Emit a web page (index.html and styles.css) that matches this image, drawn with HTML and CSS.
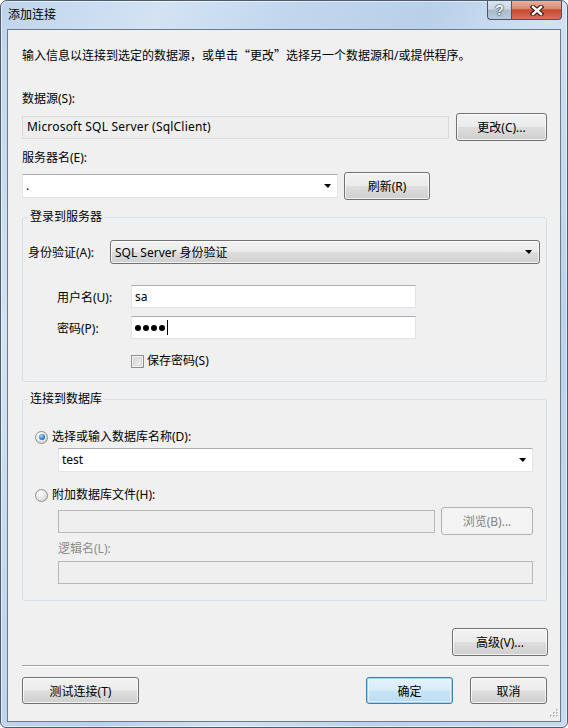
FILE: index.html
```html
<!DOCTYPE html>
<html lang="zh-CN">
<head>
    <meta charset="UTF-8">
    <title>添加连接</title>
    <link rel="stylesheet" href="styles.css">
</head>
<body>
    <div class="window">
        <div class="titlebar">
            <span class="title">添加连接</span>
            <div class="caption-btns">
                <div class="cap help">?</div>
                <div class="cap close">
                    <svg width="14" height="11" viewBox="0 0 14 11">
                        <path d="M3 2 L11 9 M11 2 L3 9" stroke="#3b1810" stroke-width="4.6" stroke-linecap="square"/>
                        <path d="M3 2 L11 9 M11 2 L3 9" stroke="#ffffff" stroke-width="2.4" stroke-linecap="square"/>
                    </svg>
                </div>
            </div>
        </div>

        <div class="client">
            <p class="desc">输入信息以连接到选定的数据源，或单击<span class="cjk">“</span>更改<span class="cjk">”</span>选择另一个数据源和/或提供程序。</p>

            <div class="label lbl-source">数据源(S):</div>
            <div class="row row-source">
                <div class="field readonly">Microsoft SQL Server (SqlClient)</div>
                <button class="btn btn-change">更改(C)...</button>
            </div>

            <div class="label lbl-server">服务器名(E):</div>
            <div class="row row-server">
                <div class="field combo combo-server"><span class="combo-text">.</span><span class="arrow"></span></div>
                <button class="btn btn-refresh">刷新(R)</button>
            </div>

            <fieldset class="group group-login">
                <legend>登录到服务器</legend>
                <div class="group-body login-body">
                    <div class="row auth-row">
                        <span class="auth-label">身份验证(A):</span>
                        <div class="dropdown"><span class="combo-text">SQL Server 身份验证</span><span class="arrow"></span></div>
                    </div>
                    <div class="row cred-row user-row">
                        <span class="cred-label">用户名(U):</span>
                        <div class="field cred-field">sa</div>
                    </div>
                    <div class="row cred-row pwd-row">
                        <span class="cred-label">密码(P):</span>
                        <div class="field cred-field pwd">
                            <span class="dot"></span><span class="dot"></span><span class="dot"></span><span class="dot"></span><span class="caret"></span>
                        </div>
                    </div>
                    <label class="check-row">
                        <span class="checkbox"></span>保存密码(S)
                    </label>
                </div>
            </fieldset>

            <fieldset class="group group-db">
                <legend>连接到数据库</legend>
                <div class="group-body db-body">
                    <label class="radio-row">
                        <span class="radio checked"></span>选择或输入数据库名称(D):
                    </label>
                    <div class="field combo combo-db"><span class="combo-text">test</span><span class="arrow"></span></div>

                    <label class="radio-row radio-attach">
                        <span class="radio"></span>附加数据库文件(H):
                    </label>
                    <div class="row browse-row">
                        <div class="field disabled file-field"></div>
                        <button class="btn btn-disabled btn-browse">浏览(B)...</button>
                    </div>
                    <div class="label lbl-logic">逻辑名(L):</div>
                    <div class="field disabled logic-field"></div>
                </div>
            </fieldset>

            <div class="row advanced-row">
                <button class="btn btn-advanced">高级(V)...</button>
            </div>

            <div class="separator"></div>

            <div class="row bottom-row">
                <button class="btn btn-test">测试连接(T)</button>
                <button class="btn btn-default btn-ok">确定</button>
                <button class="btn btn-cancel">取消</button>
            </div>

            <svg class="grip" width="11" height="11" viewBox="0 0 11 11">
                <rect x="8" y="0" width="2" height="2" fill="#b9b9b9"/>
                <rect x="5" y="3" width="2" height="2" fill="#b9b9b9"/>
                <rect x="8" y="3" width="2" height="2" fill="#b9b9b9"/>
                <rect x="2" y="6" width="2" height="2" fill="#b9b9b9"/>
                <rect x="5" y="6" width="2" height="2" fill="#b9b9b9"/>
                <rect x="8" y="6" width="2" height="2" fill="#b9b9b9"/>
                <rect x="9" y="1" width="1" height="1" fill="#fff"/>
                <rect x="6" y="4" width="1" height="1" fill="#fff"/>
                <rect x="9" y="4" width="1" height="1" fill="#fff"/>
                <rect x="3" y="7" width="1" height="1" fill="#fff"/>
                <rect x="6" y="7" width="1" height="1" fill="#fff"/>
                <rect x="9" y="7" width="1" height="1" fill="#fff"/>
            </svg>
        </div>
    </div>
</body>
</html>
```

FILE: styles.css
```css
* {
    box-sizing: border-box;
}
body {
    margin: 0;
    font-family: "Segoe UI", "Noto Sans", "Noto Sans CJK SC", sans-serif;
    font-size: 12px;
    color: #000;
    background: #fff;
}
.cjk {
    font-family: "Noto Sans CJK SC", sans-serif;
}

/* window frame */
.window {
    width: 568px;
    height: 728px;
    border: 1px solid #4d5d70;
    border-radius: 7px 7px 6px 6px;
    background: linear-gradient(115deg, #bfd4ec 0%, #d3e3f4 18%, #c2d7ee 32%, #b9d0ea 48%, #d2e2f3 62%, #bcd2eb 78%, #c8dbf0 100%);
    box-shadow: inset 0 0 0 1px rgba(255, 255, 255, 0.55);
    display: flex;
    flex-direction: column;
}
.titlebar {
    height: 28px;
    display: flex;
    align-items: flex-start;
}
.title {
    padding: 5px 0 0 7px;
    line-height: 18px;
}
.caption-btns {
    margin-left: auto;
    margin-right: 5px;
    display: flex;
    height: 19px;
}
.cap {
    height: 19px;
    border: 1px solid #4a5667;
    border-top: none;
    display: flex;
    align-items: center;
    justify-content: center;
}
.help {
    width: 24px;
    border-right: none;
    border-radius: 0 0 0 4px;
    background: linear-gradient(#dbe5ef 0%, #c9d6e3 45%, #a8bacc 50%, #b9cadb 100%);
    color: #fff;
    font-weight: bold;
    font-size: 14px;
    font-family: "Liberation Sans", sans-serif;
    text-shadow: 0 0 1px #2c3a48, 0 0 1px #2c3a48, 0 0 2px #2c3a48;
}
.close {
    width: 51px;
    border-radius: 0 0 4px 0;
    background: linear-gradient(#eab0a0 0%, #dc8a74 42%, #c64a30 50%, #d4735c 100%);
}

/* client area */
.client {
    flex: 1;
    margin: 0 6px 5px;
    border: 1px solid #6c7a89;
    background: #f0f0f0;
    padding: 0 13px 0 14px;
    position: relative;
    display: flex;
    flex-direction: column;
}
.desc {
    margin: 16px 0 0;
    line-height: 18px;
}
.label {
    line-height: 18px;
}
.lbl-source {
    margin-top: 25px;
}
.lbl-server {
    margin-top: 8px;
}
.row {
    display: flex;
    align-items: center;
}

/* fields */
.field {
    height: 23px;
    background: #fff;
    border: 1px solid #e2e3ea;
    border-top-color: #abadb3;
    padding: 0 3px;
    display: flex;
    align-items: center;
    line-height: 18px;
}
.readonly {
    width: 427px;
    background: #eeeeee;
    border-color: #dadada;
    padding-left: 4px;
    letter-spacing: 0.2px;
}
.disabled {
    background: #efefef;
    border-color: #b5b8ba;
}
.combo {
    height: 24px;
}
.combo-text {
    flex: 1;
}
.arrow {
    width: 0;
    height: 0;
    border-left: 4px solid transparent;
    border-right: 3px solid transparent;
    border-top: 4px solid #000;
    margin-right: 3px;
}

/* buttons */
.btn {
    height: 28px;
    font: inherit;
    color: #000;
    border: 1px solid #707070;
    border-radius: 3px;
    background: linear-gradient(#f2f2f2 0%, #ebebeb 48%, #dddddd 52%, #cfcfcf 100%);
    box-shadow: inset 0 0 0 1px rgba(255, 255, 255, 0.75);
    padding: 0;
}
.btn-default {
    border-color: #3c7fb1;
    background: linear-gradient(#e6f3fc 0%, #d8ecfa 48%, #c8e4f7 52%, #bcdcf3 100%);
    box-shadow: inset 0 0 0 1px #9fd5f5, inset 0 0 0 2px rgba(255, 255, 255, 0.5);
}
.btn-disabled {
    border-color: #adb2b5;
    background: #f4f4f4;
    color: #838383;
    box-shadow: none;
}

.row-source {
    margin-top: 5px;
    height: 28px;
}
.btn-change {
    width: 91px;
    margin-left: auto;
}
.row-server {
    margin-top: 5px;
    height: 28px;
}
.combo-server {
    width: 316px;
}
.btn-refresh {
    width: 86px;
    margin-left: 6px;
}

/* group boxes */
.group {
    margin: 8px 0 0;
    padding: 0;
    border: 1px solid #d5dfe5;
    border-radius: 3px;
    min-width: 0;
}
.group legend {
    margin-left: 5px;
    padding: 0 2px;
    line-height: 18px;
}
.login-body {
    padding: 14px 6px 11px 5px;
}
.auth-row {
    height: 24px;
}
.auth-label {
    width: 82px;
}
.dropdown {
    flex: 1;
    height: 24px;
    border: 1px solid #707070;
    border-radius: 3px;
    background: linear-gradient(#f2f2f2 0%, #ebebeb 48%, #dddddd 52%, #cfcfcf 100%);
    box-shadow: inset 0 0 0 1px rgba(255, 255, 255, 0.75);
    display: flex;
    align-items: center;
    padding: 0 4px 0 4px;
}
.cred-row {
    height: 23px;
    margin-left: 29px;
}
.user-row {
    margin-top: 21px;
}
.pwd-row {
    margin-top: 8px;
}
.cred-label {
    width: 74px;
}
.cred-field {
    width: 285px;
}
.pwd {
    gap: 2px;
}
.dot {
    width: 6px;
    height: 6px;
    border-radius: 50%;
    background: #000;
}
.caret {
    width: 1px;
    height: 15px;
    background: #000;
}
.check-row {
    margin-top: 13px;
    margin-left: 103px;
    line-height: 18px;
    display: flex;
    align-items: center;
}
.checkbox {
    width: 13px;
    height: 13px;
    border: 1px solid #8e8f8f;
    background: linear-gradient(135deg, #cfcfcf, #f6f6f6);
    box-shadow: inset 0 0 0 1px #f4f4f4, inset 0 0 0 2px #d8d8d8;
    margin-right: 3px;
}

.db-body {
    padding: 20px 13px 16px 12px;
}
.radio-row {
    line-height: 18px;
    display: flex;
    align-items: center;
}
.radio {
    width: 13px;
    height: 13px;
    border-radius: 50%;
    border: 1px solid #8e8f8f;
    background: radial-gradient(circle at 35% 30%, #ffffff 0%, #e4e4e4 55%, #c9c9c9 100%);
    margin-right: 4px;
    display: flex;
    align-items: center;
    justify-content: center;
}
.radio.checked::after {
    content: "";
    width: 6px;
    height: 6px;
    border-radius: 50%;
    background: radial-gradient(circle at 40% 35%, #b6e3ff 0%, #3f8ee0 45%, #0d4f9e 100%);
}
.combo-db {
    margin: 2px 0 0 23px;
}
.radio-attach {
    margin-top: 14px;
}
.browse-row {
    margin: 3px 0 0 23px;
    height: 28px;
}
.file-field {
    width: 377px;
}
.btn-browse {
    width: 92px;
    margin-left: auto;
}
.lbl-logic {
    margin: 5px 0 0 23px;
    color: #8d8d8d;
}
.logic-field {
    margin: 3px 0 0 23px;
}

/* bottom */
.advanced-row {
    margin-top: 27px;
    justify-content: flex-end;
    margin-right: -1px;
}
.btn-advanced {
    width: 96px;
}
.separator {
    margin: 9px -2px 0 0;
    height: 2px;
    border-top: 1px solid #a0a0a0;
    border-bottom: 1px solid #ffffff;
}
.bottom-row {
    margin-top: 10px;
}
.bottom-row .btn {
    height: 27px;
}
.btn-test {
    width: 117px;
}
.btn-ok {
    width: 87px;
    margin-left: auto;
}
.btn-cancel {
    width: 77px;
    margin-left: 17px;
}
.grip {
    position: absolute;
    right: 1px;
    bottom: 1px;
}
```
